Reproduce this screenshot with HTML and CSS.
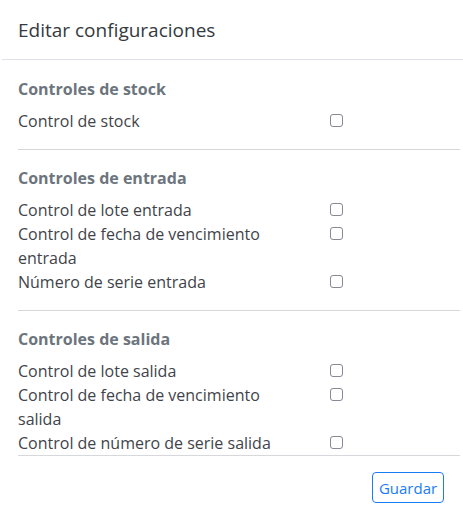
FILE: index.html
```html
<!DOCTYPE html>
<html lang="es">
<head>
<meta charset="utf-8">
<link rel="stylesheet" href="styles.css">
</head>
<body>
<div class="modal">
  <div class="modal-header">
    <h5 class="modal-title">Editar configuraciones</h5>
  </div>
  <div class="modal-body">
    <section class="group">
      <h6 class="group-title">Controles de stock</h6>
      <div class="row"><span class="label">Control de stock</span><span class="check"><input type="checkbox"></span></div>
    </section>
    <section class="group">
      <h6 class="group-title">Controles de entrada</h6>
      <div class="row"><span class="label">Control de lote entrada</span><span class="check"><input type="checkbox"></span></div>
      <div class="row"><span class="label">Control de fecha de vencimiento entrada</span><span class="check"><input type="checkbox"></span></div>
      <div class="row"><span class="label">Número de serie entrada</span><span class="check"><input type="checkbox"></span></div>
    </section>
    <section class="group last">
      <h6 class="group-title">Controles de salida</h6>
      <div class="row"><span class="label">Control de lote salida</span><span class="check"><input type="checkbox"></span></div>
      <div class="row"><span class="label">Control de fecha de vencimiento salida</span><span class="check"><input type="checkbox"></span></div>
      <div class="row"><span class="label">Control de número de serie salida</span><span class="check"><input type="checkbox"></span></div>
    </section>
    <div class="footer">
      <button class="btn">Guardar</button>
    </div>
  </div>
</div>
</body>
</html>
```
FILE: styles.css
```css
html, body {
  margin: 0;
  padding: 0;
  background: #fff;
}
body {
  font-family: "Open Sans", "Noto Sans", sans-serif;
  color: #3f444a;
  font-size: 16px;
}
.modal {
  width: 463px;
}
.modal-header {
  height: 60px;
  box-sizing: border-box;
  border-bottom: 1px solid #dee2e6;
  display: flex;
  align-items: center;
  padding: 0 16px;
  margin-left: 2px;
}
.modal-title {
  margin: 0;
  font-size: 19px;
  font-weight: 400;
  color: #343a40;
}
.modal-body {
  padding: 17px 3px 0 18px;
}
.group {
  border-bottom: 1px solid #d6d8db;
  padding-bottom: 16px;
  margin-bottom: 16px;
}
.group.last {
  padding-bottom: 0;
  margin-bottom: 0;
}
.group-title {
  margin: 0 0 8px;
  font-size: 16px;
  font-weight: 700;
  color: #6c757d;
  line-height: 24px;
}
.row {
  display: flex;
  line-height: 24px;
}
.label {
  width: 265px;
  flex: none;
}
.check {
  margin-left: 47px;
  display: flex;
  align-items: flex-start;
  padding-top: 5px;
}
.check input {
  appearance: none;
  -webkit-appearance: none;
  width: 13px;
  height: 13px;
  margin: 0;
  border: 1px solid #8a8796;
  border-radius: 3px;
  background: #fff;
  box-sizing: border-box;
}
.footer {
  display: flex;
  justify-content: flex-end;
  padding: 16px 16px 0 0;
}
.btn {
  font-family: inherit;
  font-size: 15px;
  color: #1a7cf5;
  background: #fff;
  border: 1px solid #1a7cf5;
  border-radius: 4px;
  padding: 0;
  height: 31px;
  width: 72px;
}
```
